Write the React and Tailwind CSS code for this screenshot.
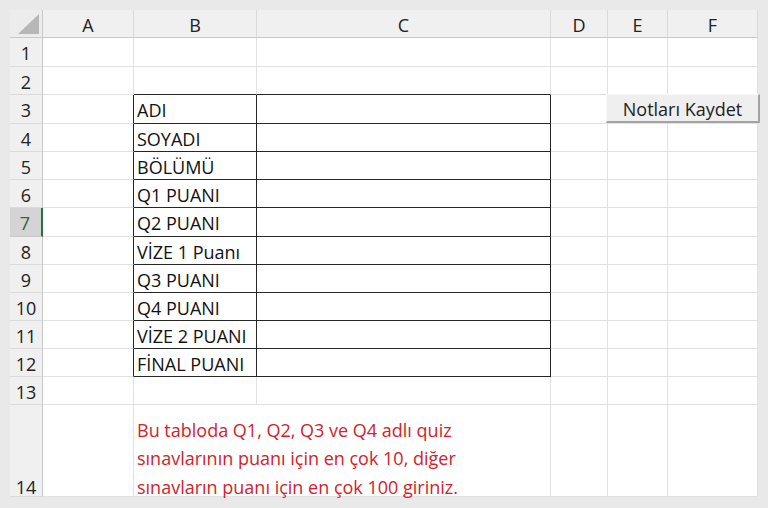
import React from 'react';

const cols = ['A', 'B', 'C', 'D', 'E', 'F'];
const labels = ['ADI', 'SOYADI', 'BÖLÜMÜ', 'Q1 PUANI', 'Q2 PUANI', 'VİZE 1 Puanı', 'Q3 PUANI', 'Q4 PUANI', 'VİZE 2 PUANI', 'FİNAL PUANI'];

const grid = 'border-r border-b border-[#e1e1e1]';

function Cell({ r, c }) {
    // table B3:C12 gets black borders like in the sheet
    const inTable = r >= 3 && r <= 12 && (c === 1 || c === 2);
    const aboveTable = r === 2 && (c === 1 || c === 2);
    const leftOfTable = r >= 3 && r <= 12 && c === 0;
    let cls = 'border-r border-b ';
    if (inTable) cls += 'border-[#262626]';
    else if (aboveTable) cls += 'border-r-[#e1e1e1] border-b-[#262626]';
    else if (leftOfTable) cls += 'border-r-[#262626] border-b-[#e1e1e1]';
    else cls += 'border-[#e1e1e1]';
    return (
        <div className={`${cls} bg-white flex items-center pl-[3px] pt-[2px] text-[#111] overflow-hidden whitespace-nowrap`}>
            {inTable && c === 1 ? labels[r - 3] : null}
        </div>
    );
}

export default function App() {
    const rows = Array.from({ length: 13 }, (_, i) => i + 1);
    return (
        <div
            className="w-[768px] h-[508px] bg-[#e9e9e9] pl-[10px] pt-[10px] overflow-hidden relative"
            style={{ fontFamily: '"Open Sans", "Noto Sans", sans-serif' }}
        >
            <div className="grid grid-cols-[33px_91px_123px_294px_57px_60px_90px] grid-rows-[28px_29px_28px_29px_28px_28px_28px_29px_28px_28px_28px_28px_28px_28px_92px] text-[18px] leading-none w-[748px]">
                {/* corner */}
                <div className="bg-[#ececec] border-r border-b border-[#c9c9c9] flex items-end justify-end pr-[3px] pb-[3px]">
                    <svg width="21" height="20" viewBox="0 0 21 20"><path d="M21 0 L21 20 L0 20 Z" fill="#b7b7b7" /></svg>
                </div>
                {cols.map((c) => (
                    <div key={c} className="bg-[#f0f0f0] border-r border-b border-r-[#d9d9d9] border-b-[#c9c9c9] flex items-center justify-center pt-[2px] text-[#222]">
                        {c}
                    </div>
                ))}
                {rows.map((r) => (
                    <React.Fragment key={r}>
                        <div
                            className={
                                r === 7
                                    ? 'bg-[#d4d4d4] border-r-2 border-b border-r-[#217346] border-b-[#c9c9c9] flex items-center justify-center pt-[2px] text-[#3d5d47] pr-[1px]'
                                    : 'bg-[#f0f0f0] border-r border-b border-r-[#c9c9c9] border-b-[#dadada] flex items-center justify-center pt-[2px] text-[#222]'
                            }
                        >
                            {r}
                        </div>
                        {[0, 1, 2, 3, 4, 5].map((c) => (
                            <Cell key={c} r={r} c={c} />
                        ))}
                    </React.Fragment>
                ))}
                {/* row 14 */}
                <div className="bg-[#f0f0f0] border-r border-b border-r-[#c9c9c9] border-b-[#dadada] flex items-end justify-center text-[#222]">
                    14
                </div>
                <div className={`${grid} bg-white`}></div>
                <div className={`${grid} bg-white col-span-2 flex items-end pl-[3px]`}>
                    <p className="text-[#d3222a] leading-[28.5px] whitespace-nowrap mb-[-5px]">
                        Bu tabloda Q1, Q2, Q3 ve Q4 adlı quiz<br />
                        sınavlarının puanı için en çok 10, diğer<br />
                        sınavların puanı için en çok 100 giriniz.
                    </p>
                </div>
                <div className={`${grid} bg-white`}></div>
                <div className={`${grid} bg-white`}></div>
                <div className={`${grid} bg-white`}></div>
            </div>

            {/* form button over the sheet */}
            <button className="absolute left-[606px] top-[94px] w-[154px] h-[29px] bg-[#efefef] border-b-2 border-r-2 border-[#a3a3a3] border-t border-l border-t-[#f8f8f8] border-l-[#f8f8f8] text-[18px] leading-none text-[#222] flex items-center justify-center pt-[1px]">
                Notları Kaydet
            </button>
        </div>
    );
}
